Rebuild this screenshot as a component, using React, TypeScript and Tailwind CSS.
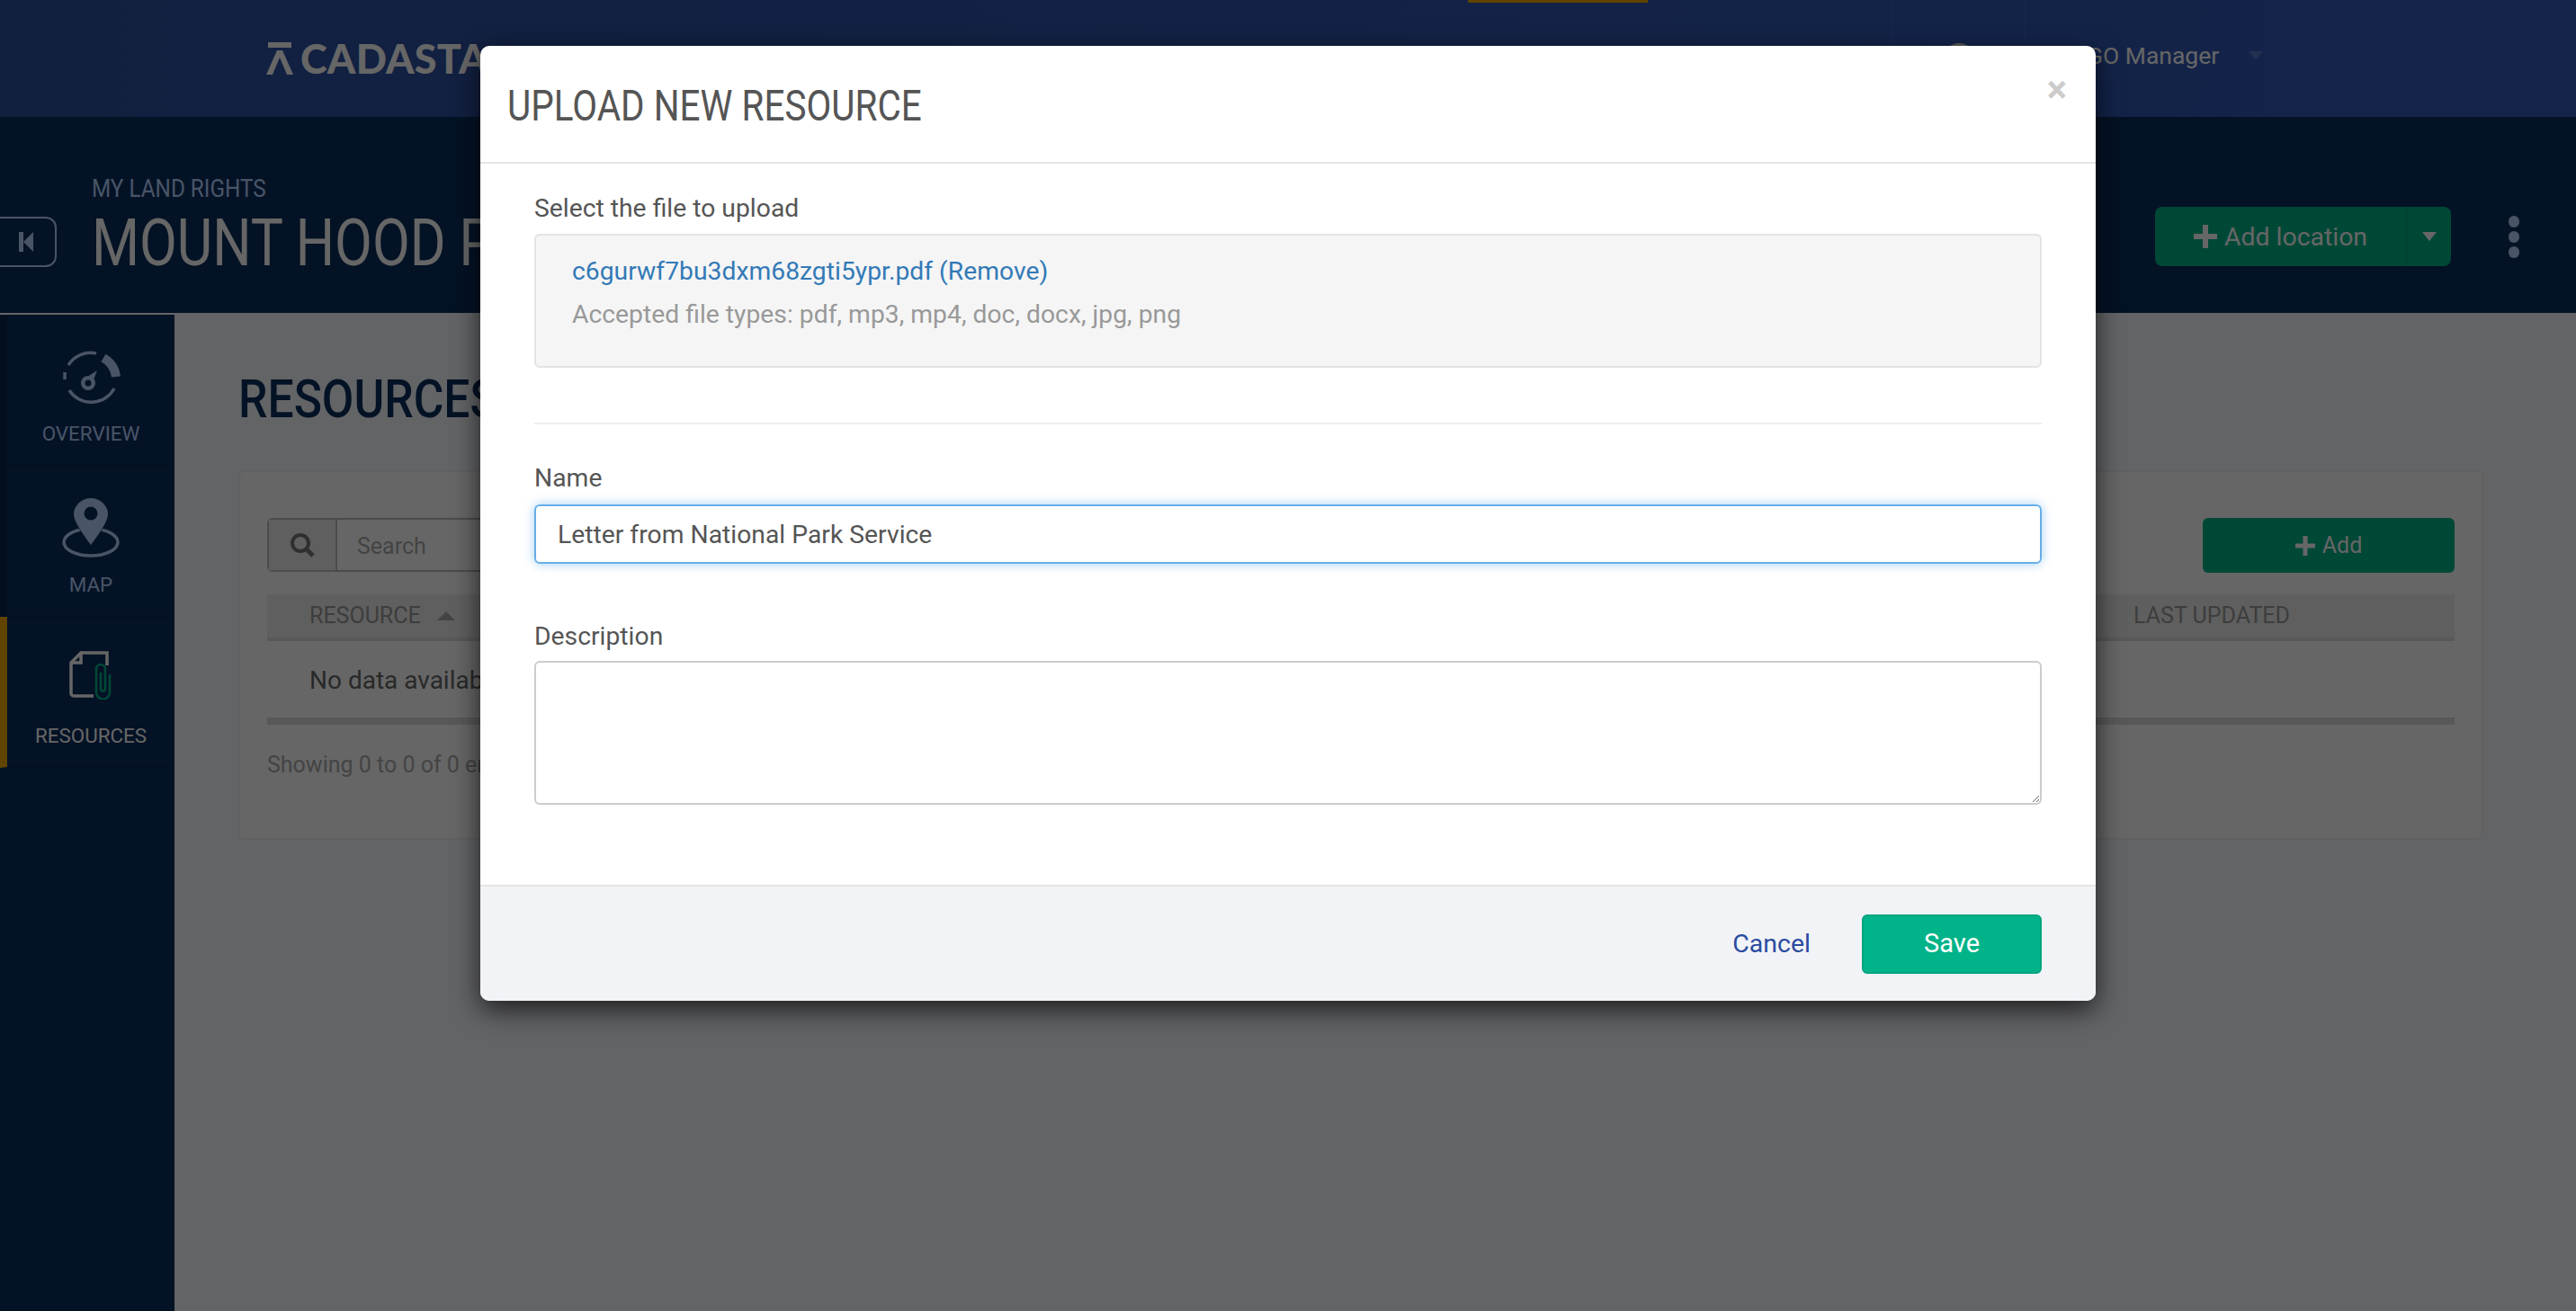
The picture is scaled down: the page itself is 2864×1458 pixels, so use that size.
const roboto = "font-['Roboto',sans-serif]";

function Logo() {
  return (
    <div className="flex items-center gap-[8px]">
      <svg width="30" height="36" viewBox="0 0 30 36" fill="#ffffff">
        <rect x="2" y="0" width="26" height="6" />
        <path d="M12 9h6l12 27h-7l-8-19-8 19H0z" />
      </svg>
      <span className="font-['Lato',sans-serif] text-[45px] leading-none font-black tracking-[0.2px] text-white">CADASTA</span>
    </div>
  );
}

function TopBar() {
  return (
    <header className="relative flex h-[130px] items-center bg-gradient-to-r from-[#2d50a0] to-[#3259b9] pl-[296px]">
      <Logo />
      <div className="absolute top-0 left-[1632px] h-[3px] w-[200px] bg-[#f0ab00]" />
      <div className="ml-auto flex h-full items-center">
        <div className="flex h-full w-[147px] items-center justify-center border-x border-[#3a62bd]">
          <div className="h-[34px] w-[34px] rounded-full bg-[#dddddd]" />
        </div>
        <div className="flex w-[613px] items-center pb-[6px] pl-[50px] text-[26.5px] text-white">
          <span>NGO Manager</span>
          <svg className="ml-[33px]" width="16" height="10" viewBox="0 0 16 10" fill="#5a78c8">
            <path d="M0 0h16L8 10z" />
          </svg>
        </div>
      </div>
    </header>
  );
}

function SubHeader() {
  return (
    <div className="flex h-[218px] items-start bg-[#0a2e5d]">
      <div className="mt-[111px] flex h-[56px] w-[63px] items-center justify-end rounded-r-[12px] border-y-2 border-r-2 border-[#b6d2ff] pr-[24px]">
        <svg width="16" height="24" viewBox="0 0 16 24" fill="#b6d2ff">
          <rect x="0" y="1" width="5" height="22" />
          <path d="M5 12 16 1v22z" />
        </svg>
      </div>
      <div className="ml-[39px] pt-[64px]">
        <div className="text-[28px] leading-[32px] text-[#b6d2ff]">
          <span className="inline-block origin-left scale-x-[0.867] whitespace-nowrap">MY LAND RIGHTS</span>
        </div>
        <div className="mt-[6px] text-[73px] leading-[76px] text-white">
          <span className="inline-block origin-left scale-x-[0.832] whitespace-nowrap">MOUNT HOOD PARK</span>
        </div>
      </div>
      <div className="mt-[100px] ml-auto flex h-[66px] w-[329px] rounded-[8px] bg-[#00b388] text-[28.4px] text-white">
        <div className="flex flex-1 items-center justify-center gap-[8px]">
          <Plus size={26} />
          <span className="pt-[2px]">Add location</span>
        </div>
        <div className="flex w-[50px] items-center justify-center border-l border-[#009975]">
          <svg width="16" height="10" viewBox="0 0 16 10" fill="#ffffff">
            <path d="M0 0h16L8 10z" />
          </svg>
        </div>
      </div>
      <div className="mt-[110px] mr-[63px] ml-[64px] flex flex-col gap-[4px]">
        <div className="h-[13px] w-[12px] rounded-full bg-[#b6d2ff]" />
        <div className="h-[13px] w-[12px] rounded-full bg-[#b6d2ff]" />
        <div className="h-[13px] w-[12px] rounded-full bg-[#b6d2ff]" />
      </div>
    </div>
  );
}

function Plus({ size }: { size: number }) {
  return (
    <svg width={size} height={size} viewBox="0 0 26 26" fill="#ffffff">
      <path d="M10 0h6v10h10v6H16v10h-6V16H0v-6h10z" />
    </svg>
  );
}

function OverviewIcon() {
  return (
    <svg width="66" height="60" viewBox="0 0 66 60" fill="none" stroke="#b6d2ff">
      <path d="M8 16A29 29 0 0 1 39 3" strokeWidth="3.5" />
      <path d="M4 32v-8M9 44a29 29 0 0 0 50-2" strokeWidth="3.5" />
      <path d="M47 8a28 28 0 0 1 14 21" strokeWidth="10" />
      <path d="M23 33 40 22l-7 18z" fill="#b6d2ff" stroke="none" />
      <circle cx="30" cy="36" r="8" fill="#b6d2ff" stroke="none" />
      <circle cx="30" cy="36" r="3.5" fill="#0a2e5d" stroke="none" />
    </svg>
  );
}

function MapIcon() {
  return (
    <svg width="64" height="66" viewBox="0 0 64 66" fill="none">
      <ellipse cx="32" cy="49" rx="30" ry="15" stroke="#b6d2ff" strokeWidth="3.5" />
      <path d="M32 0c10 0 19 8 19 18 0 9-10 23-19 36-9-13-19-27-19-36C13 8 22 0 32 0z" fill="#0a2e5d" />
      <path d="M32 0c10 0 19 8 19 18 0 8-10 22-19 34-9-12-19-26-19-34C13 8 22 0 32 0z" fill="#b6d2ff" />
      <circle cx="32" cy="17" r="7.5" fill="#0a2e5d" />
    </svg>
  );
}

function ResourceIcon() {
  return (
    <svg width="50" height="54" viewBox="0 0 50 54" fill="none">
      <path d="M14 2h29v14M28 50H6a3 3 0 0 1-3-3V13L14 2v11H3" stroke="#ffffff" strokeWidth="3.5" />
      <path d="M36 24v18a2.5 2.5 0 0 0 5 0V20a5 5 0 0 0-10 0v26a7.5 7.5 0 0 0 15 0V26" stroke="#00b388" strokeWidth="2.5" />
    </svg>
  );
}

function NavItem({ label, active, icon, iconBottom }: { label: string; active?: boolean; icon: React.ReactNode; iconBottom: string }) {
  return (
    <div className={`flex h-[168px] flex-col items-center border-b border-[#08264d] ${active ? "border-l-8 border-l-[#f0ab00]" : "border-l-8 border-l-[#08264f]"}`}>
      <div className={`flex h-[110px] items-end ${iconBottom}`}>{icon}</div>
      <div className={`mt-[10px] text-[22.4px] leading-[24px] ${active ? "text-white" : "text-[#b6d2ff]"}`}>{label}</div>
    </div>
  );
}

function Sidebar() {
  return (
    <aside className="w-[194px] shrink-0 border-t-2 border-white bg-[#0a2e5d]">
      <NavItem label="OVERVIEW" iconBottom="pb-[10px]" icon={<OverviewIcon />} />
      <NavItem label="MAP" iconBottom="pb-[8px]" icon={<MapIcon />} />
      <NavItem label="RESOURCES" iconBottom="pb-[18px]" active icon={<ResourceIcon />} />
    </aside>
  );
}

function ResourcesPanel() {
  return (
    <div className="ml-[71px] w-[2496px] pt-[64px]">
      <h1 className="text-[60px] leading-[64px] font-medium text-[#0a2e5d]">
        <span className="inline-block origin-left scale-x-[0.86] whitespace-nowrap">RESOURCES</span>
      </h1>
      <div className="mt-[47px] h-[411px] rounded-[6px] border-2 border-[#f2f2f2] bg-white px-[30px] pt-[51px]">
        <div className="flex items-start justify-between">
          <div className="flex h-[60px] w-[800px] rounded-[6px] border-2 border-[#bbbbbb]">
            <div className="flex w-[76px] items-center justify-center border-r-2 border-[#bbbbbb] bg-[#eeeeee]">
              <svg width="28" height="28" viewBox="0 0 28 28" fill="none" stroke="#777777" strokeWidth="4">
                <circle cx="12" cy="12" r="9" />
                <path d="M18.5 18.5 26 26" strokeWidth="5" />
              </svg>
            </div>
            <div className="flex items-center pt-[3px] pl-[22px] text-[25px] text-[#aaaaaa]">Search</div>
          </div>
          <div className="flex h-[61px] w-[280px] items-center justify-center gap-[8px] rounded-[6px] bg-[#00b388] text-[25px] text-white">
            <Plus size={22} />
            <span>Add</span>
          </div>
        </div>
        <div className="mt-[24px] flex h-[52px] items-center justify-between border-b-4 border-[#dddddd] bg-[#eeeeee] pr-[183px] pl-[47px] text-[25px] text-[#999999]">
          <div className="flex items-center gap-[18px]">
            <span>RESOURCE</span>
            <svg width="20" height="10" viewBox="0 0 20 10" fill="#aaaaaa">
              <path d="M10 0l10 10H0z" />
            </svg>
          </div>
          <span>LAST UPDATED</span>
        </div>
        <div className="flex h-[93px] items-center border-b-[8px] border-[#dddddd] pt-[2px] pl-[47px] text-[28px] text-[#666666]">No data available in table</div>
        <div className="mt-[30px] text-[25px] leading-[30px] text-[#aaaaaa]">Showing 0 to 0 of 0 entries</div>
      </div>
    </div>
  );
}

function UploadModal() {
  return (
    <div className={`absolute top-[51px] left-[534px] w-[1796px] overflow-hidden rounded-[10px] bg-white shadow-[0_10px_30px_rgba(0,0,0,0.7)] ${roboto}`}>
      <div className="relative flex h-[131px] items-center border-b-2 border-[#e5e5e5] pt-[4px] pl-[30px]">
        <h2 className="text-[48px] leading-none text-[#555555]">
          <span className="inline-block origin-left scale-x-[0.843] whitespace-nowrap">UPLOAD NEW RESOURCE</span>
        </h2>
        <span className="absolute top-[28px] right-[32px] text-[42px] leading-none font-bold text-[#cccccc]">×</span>
      </div>
      <div className="h-[802px] px-[60px] pt-[33px]">
        <label className="block text-[28.3px] leading-[34px] text-[#555555]">Select the file to upload</label>
        <div className="mt-[11px] h-[149px] rounded-[6px] border-2 border-[#e3e3e3] bg-[#f5f5f5] px-[40px] pt-[22px]">
          <div className="text-[28.3px] leading-[36px] text-[#337ab7]">c6gurwf7bu3dxm68zgti5ypr.pdf (Remove)</div>
          <div className="mt-[12px] text-[28.3px] leading-[36px] text-[#999999]">Accepted file types: pdf, mp3, mp4, doc, docx, jpg, png</div>
        </div>
        <hr className="mt-[61px] border-t-2 border-[#eeeeee]" />
        <label className="mt-[43px] block text-[28.3px] leading-[34px] text-[#555555]">Name</label>
        <input
          readOnly
          value="Letter from National Park Service"
          className="mt-[12px] block h-[66px] w-full rounded-[6px] border-2 border-[#66afe9] px-[24px] text-[28.3px] text-[#555555] shadow-[0_0_12px_rgba(102,175,233,0.6)] outline-none"
        />
        <label className="mt-[64px] block text-[28.3px] leading-[34px] text-[#555555]">Description</label>
        <textarea readOnly className="mt-[10px] block h-[160px] w-full rounded-[6px] border-2 border-[#cccccc] outline-none" />
      </div>
      <div className="flex h-[129px] items-center justify-end gap-[57px] border-t-2 border-[#e5e5e5] bg-[#f1f3f7] pr-[60px]">
        <span className="pt-[2px] text-[28.5px] text-[#2b4ba0]">Cancel</span>
        <button className="h-[66px] w-[200px] rounded-[6px] border-2 border-[#00a57e] bg-[#00b388] text-[29px] text-white">Save</button>
      </div>
    </div>
  );
}

export default function App() {
  return (
    <div className={`relative h-[1458px] w-[2864px] overflow-hidden bg-[#f8fafe] ${roboto}`}>
      <TopBar />
      <SubHeader />
      <div className="flex h-[1110px]">
        <Sidebar />
        <ResourcesPanel />
      </div>
      <div className="absolute inset-0 bg-black/60" />
      <UploadModal />
    </div>
  );
}
